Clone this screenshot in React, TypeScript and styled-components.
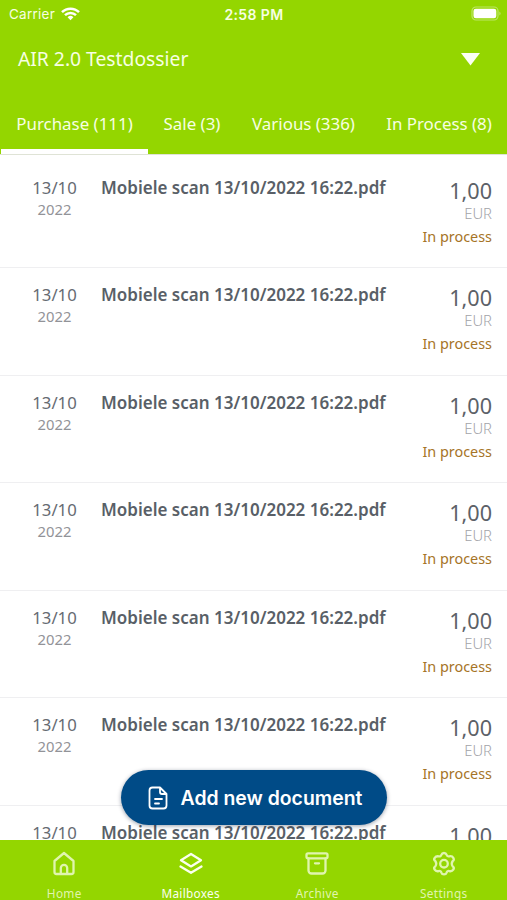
import React from "react";
import styled, { createGlobalStyle } from "styled-components";

const GREEN = "#94d600";

const GlobalStyle = createGlobalStyle`
  * { box-sizing: border-box; }
  html, body { margin: 0; padding: 0; background: #fff; overflow: hidden; }
`;

const Screen = styled.div`
  width: 507px;
  height: 900px;
  display: flex;
  flex-direction: column;
  position: relative;
  overflow: hidden;
  background: #fff;
  font-family: "Noto Sans", sans-serif;
`;

const Header = styled.header`
  flex: none;
  height: 155px;
  background: ${GREEN};
  background-clip: padding-box;
  color: #f7ffe2;
  border-bottom: 1px solid #dfe3d6;
  display: flex;
  flex-direction: column;
`;

const StatusBar = styled.div`
  height: 28px;
  display: grid;
  grid-template-columns: 1fr auto 1fr;
  align-items: center;
  padding: 0 5px 0 9px;
  font-family: Inter, sans-serif;
  font-size: 13.5px;
`;

const Carrier = styled.div`
  display: flex;
  align-items: center;
  gap: 6px;
  letter-spacing: 0.25px;
`;

const Clock = styled.div`
  font-weight: 600;
  font-size: 14px;
  letter-spacing: 0.4px;
  margin-right: 3px;
`;

const Battery = styled.div`
  justify-self: end;
  display: flex;
  margin-top: -1px;
`;

const DossierPicker = styled.div`
  height: 62px;
  display: flex;
  align-items: center;
  justify-content: space-between;
  padding: 0 27px 0 18px;
`;

const DossierName = styled.span`
  font-size: 19.3px;
  line-height: 26px;
`;

const Tabs = styled.nav`
  flex: 1;
  display: grid;
  grid-template-columns: 147px 88px 135px 136px;
  padding-left: 1px;
`;

const Tab = styled.div<{ $active?: boolean }>`
  display: flex;
  align-items: center;
  justify-content: center;
  padding-top: 8px;
  padding-bottom: ${(p) => (p.$active ? 0 : 5)}px;
  border-bottom: ${(p) => (p.$active ? "5px solid #fff" : "none")};
  font-size: 16.9px;
  white-space: nowrap;
`;

const List = styled.main`
  flex: 1;
  min-height: 0;
  overflow: hidden;
  padding-top: 5.5px;
`;

const Row = styled.article`
  height: 107.5px;
  border-bottom: 1px solid #efeff1;
  display: grid;
  grid-template-columns: 93px 1fr auto;
  padding: 14.4px 15px 0 8px;
`;

const DateCell = styled.div`
  width: 93px;
  text-align: center;
`;

const Day = styled.div`
  font-size: 16.7px;
  line-height: 25px;
  color: #666b72;
`;

const Year = styled.div`
  font-size: 14.8px;
  line-height: 20px;
  margin-top: -1px;
  color: #929398;
`;

const Title = styled.div`
  font-size: 17px;
  font-weight: 600;
  line-height: 25px;
  color: #595f67;
  white-space: nowrap;
`;

const AmountCell = styled.div`
  text-align: right;
`;

const Amount = styled.div`
  font-size: 21.6px;
  line-height: 31px;
  color: #5c6168;
`;

const Currency = styled.div`
  font-size: 14.8px;
  font-weight: 300;
  line-height: 20px;
  margin: -3px 0 2px;
  color: #a2a3a8;
`;

const State = styled.div`
  font-size: 14.4px;
  line-height: 24px;
  color: #a67427;
`;

const AddButton = styled.button`
  position: absolute;
  left: 121px;
  top: 770px;
  width: 266px;
  height: 55px;
  border: 0;
  border-radius: 28px;
  padding: 0;
  background: #004b87;
  color: #fff;
  display: flex;
  align-items: center;
  justify-content: center;
  gap: 11px;
  font: 600 19.4px Inter, sans-serif;
  box-shadow: 0 1px 4px rgba(0, 20, 50, 0.4);
`;

const BottomBar = styled.footer`
  flex: none;
  height: 60px;
  background: ${GREEN};
  display: grid;
  grid-template-columns: repeat(4, 1fr);
  padding-left: 1px;
`;

const BottomItem = styled.div<{ $active?: boolean }>`
  display: flex;
  flex-direction: column;
  align-items: center;
  padding-top: 9px;
  color: ${(p) => (p.$active ? "#fbfff0" : "#e0f5ae")};
  font-size: 11.8px;
  line-height: 16px;
  letter-spacing: 0.3px;
`;

const ItemIcon = styled.svg`
  width: 28px;
  height: 28px;
  margin-bottom: 8px;
  fill: none;
  stroke: currentColor;
  stroke-width: 2.3;
  stroke-linecap: round;
  stroke-linejoin: round;
`;

const tabs = ["Purchase (111)", "Sale (3)", "Various (336)", "In Process (8)"];

const documents = Array.from({ length: 7 }, (_, id) => ({
  id,
  day: "13/10",
  year: "2022",
  title: "Mobiele scan 13/10/2022 16:22.pdf",
  amount: "1,00",
  currency: "EUR",
  state: "In process",
}));

const navigation = [
  {
    label: "Home",
    icon: <path d="M4.500 12 14 4l9.500 8V23a2 2 0 0 1-2 2h-15a2 2 0 0 1-2-2ZM10.800 25v-6a3.200 3.200 0 0 1 6.400 0v6" />,
  },
  {
    label: "Mailboxes",
    icon: <path d="M14 5 24 11.200 14 17.400 4 11.200ZM3.500 17.500 14 23.800l10.500-6.300" />,
  },
  {
    label: "Archive",
    icon: (
      <>
        <rect x="3.500" y="4.300" width="21" height="5" rx="1.500" />
        <path d="M5.500 9.300V21.500a3 3 0 0 0 3 3h11a3 3 0 0 0 3-3V9.300M12 14.300h4" />
      </>
    ),
  },
  {
    label: "Settings",
    icon: (
      <g transform="translate(0 .7)">
        <path d="M11.400 5.100Q12.000 3.300 14 3.300T16.600 5.100Q17.200 7.200 19.300 6.600Q22 5.900 23.300 8.100T22.700 11.300Q20.800 14 22.700 16.700Q24.600 18 23.300 20T19.300 21.400Q17.200 20.800 16.600 22.900Q16 24.700 14 24.700T11.400 22.900Q10.800 20.800 8.700 21.400Q6 22.100 4.700 20T5.300 16.700Q7.200 14 5.300 11.300Q3.400 10 4.700 8.100T8.700 6.600Q10.800 7.200 11.400 5.100Z" />
        <circle cx="14" cy="14" r="3.800" />
      </g>
    ),
  },
];

export default function App() {
  return (
    <Screen>
      <GlobalStyle />
      <Header>
        <StatusBar>
          <Carrier>
            Carrier
            <svg width="19" height="14" viewBox="0 0 19 14" fill="none" stroke="#fff" strokeWidth="2.500">
              <path d="M1 5.200a12 12 0 0 1 17 0M4 8.200a7.800 7.800 0 0 1 11 0" />
              <path d="m9.500 13.200-2.900-3a4.100 4.100 0 0 1 5.800 0Z" fill="#fff" stroke="none" />
            </svg>
          </Carrier>
          <Clock>2:58 PM</Clock>
          <Battery>
            <svg width="31" height="15" viewBox="0 0 31 15">
              <rect x="1" y="1" width="26" height="13" rx="4" fill="none" stroke="#bce566" strokeWidth="1.200" />
              <rect x="2.500" y="2.800" width="22.800" height="9.400" rx="2.300" fill="#fff" />
              <path d="M28.500 5.500q2 2 0 4Z" fill="#c9eb80" />
            </svg>
          </Battery>
        </StatusBar>
        <DossierPicker>
          <DossierName>AIR 2.0 Testdossier</DossierName>
          <svg width="19" height="13" viewBox="0 0 19 13">
            <path d="M0 0h19L9.500 12.500Z" fill="#fbfff2" />
          </svg>
        </DossierPicker>
        <Tabs>
          {tabs.map((label, i) => (
            <Tab key={label} $active={i === 0}>
              {label}
            </Tab>
          ))}
        </Tabs>
      </Header>
      <List>
        {documents.map((d) => (
          <Row key={d.id}>
            <DateCell>
              <Day>{d.day}</Day>
              <Year>{d.year}</Year>
            </DateCell>
            <Title>{d.title}</Title>
            <AmountCell>
              <Amount>{d.amount}</Amount>
              <Currency>{d.currency}</Currency>
              <State>{d.state}</State>
            </AmountCell>
          </Row>
        ))}
      </List>
      <AddButton>
        <svg width="24" height="26" viewBox="0 0 24 26" fill="none" stroke="#fff" strokeWidth="1.800" strokeLinecap="round" strokeLinejoin="round">
          <path d="M14 2.500H6.500a3 3 0 0 0-3 3v15a3 3 0 0 0 3 3h11a3 3 0 0 0 3-3V9ZM14 2.500V7a2 2 0 0 0 2 2h4.500M9 14h7M9 18.500h4" />
        </svg>
        Add new document
      </AddButton>
      <BottomBar>
        {navigation.map((item) => (
          <BottomItem key={item.label} $active={item.label === "Mailboxes"}>
            <ItemIcon viewBox="0 0 28 28">{item.icon}</ItemIcon>
            {item.label}
          </BottomItem>
        ))}
      </BottomBar>
    </Screen>
  );
}
